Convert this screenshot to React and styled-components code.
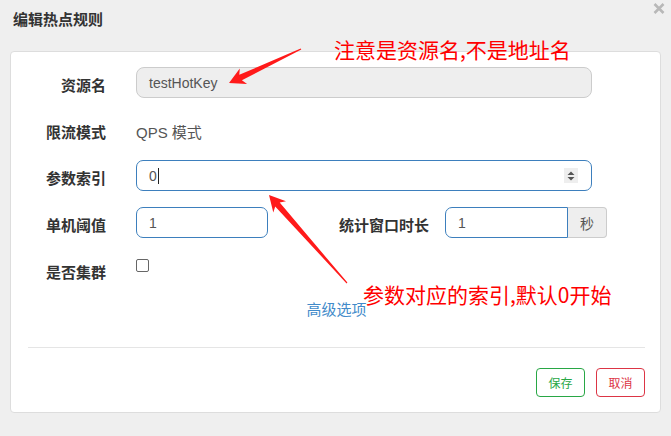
import React from "react";
import styled, { createGlobalStyle } from "styled-components";

const GlobalStyle = createGlobalStyle`
  body {
    margin: 0;
    background: #efefef;
    font-family: "Liberation Sans", "Noto Sans CJK SC", sans-serif;
  }
`;

const Frame = styled.div`
  position: relative;
  width: 671px;
  height: 436px;
  padding: 0 10px;
  box-sizing: border-box;
`;

const Header = styled.div`
  display: flex;
  justify-content: space-between;
  align-items: flex-start;
  height: 40px;
  padding-left: 3px;
  margin-right: -6px;
`;

const Title = styled.h4`
  margin: 0;
  font-size: 15px;
  line-height: 40px;
  font-weight: 700;
  color: #333;
`;

const Close = styled.svg`
  margin: 3px 2px 0 0;
`;

const Panel = styled.div`
  margin-top: 11px;
  background: #fff;
  border: 1px solid #ddd;
  border-radius: 4px;
  padding: 15px 15px 15px 0;
`;

const Row = styled.div`
  display: flex;
  align-items: flex-start;
  height: ${(p) => p.$h || 31}px;
  margin-bottom: ${(p) => p.$mb ?? 16}px;
`;

const Label = styled.label`
  flex-shrink: 0;
  box-sizing: border-box;
  width: ${(p) => p.$w || 95}px;
  margin-right: ${(p) => p.$mr || 30}px;
  padding-top: 6px;
  line-height: 25px;
  text-align: right;
  white-space: nowrap;
  font-size: 15px;
  font-weight: 700;
  color: #333;
`;

const Static = styled.div`
  padding-top: 6px;
  line-height: 25px;
  font-size: 15px;
  color: #555;
`;

const Field = styled.div`
  flex-shrink: 0;
  box-sizing: border-box;
  display: flex;
  align-items: center;
  width: ${(p) => p.$w}px;
  height: 31px;
  padding: 0 13px 0 12px;
  border: 1px solid ${(p) => (p.$disabled ? "#ccc" : "#3d7fbd")};
  border-radius: ${(p) => p.$radius || "7px"};
  background: ${(p) => (p.$disabled ? "#eee" : "#fff")};
  font-size: 14px;
  color: #555;
`;

const Value = styled.span`
  flex: 1;
  display: flex;
  align-items: center;
`;

const Caret = styled.span`
  display: inline-block;
  width: 1px;
  height: 16px;
  margin-left: 1px;
  background: #222;
`;

const Spinner = styled.svg`
  background: #eee;
`;

const Addon = styled.div`
  box-sizing: border-box;
  width: 39px;
  height: 31px;
  display: flex;
  align-items: center;
  justify-content: center;
  border: 1px solid #ccc;
  border-left: 0;
  border-radius: 0 4px 4px 0;
  background: #eee;
  font-size: 14px;
  color: #555;
`;

const Group = styled.div`
  display: flex;
`;

const Checkbox = styled.span`
  box-sizing: border-box;
  width: 13px;
  height: 13px;
  margin-top: 5px;
  border: 1px solid #666;
  border-radius: 2px;
  background: #fff;
`;

const Advanced = styled.a`
  display: block;
  padding-left: 17px;
  text-align: center;
  line-height: 20px;
  font-size: 15px;
  color: #428bca;
  text-decoration: none;
`;

const Divider = styled.div`
  height: 1px;
  margin: 27px 0 0 17px;
  background: #e5e5e5;
`;

const Footer = styled.div`
  display: flex;
  justify-content: flex-end;
  gap: 11px;
  margin-top: 20px;
`;

const Btn = styled.button`
  box-sizing: border-box;
  width: 49px;
  height: 29px;
  padding: 0;
  border: 1px solid ${(p) => p.$color};
  border-radius: 4px;
  background: #fff;
  color: ${(p) => p.$color};
  font-family: "Noto Sans CJK SC", sans-serif;
  font-size: 12px;
`;

const Overlay = styled.div`
  position: absolute;
  inset: 0;
  pointer-events: none;
`;

const Note = styled.span`
  position: absolute;
  left: ${(p) => p.$x}px;
  top: ${(p) => p.$y}px;
  font-family: "Noto Sans CJK SC", sans-serif;
  font-size: 21px;
  line-height: 21px;
  color: #ff0000;
  white-space: nowrap;
`;

// arrow polygon from tail (x1,y1) to tip (x2,y2)
function arrowPoints(x1, y1, x2, y2) {
  const headLen = 16;
  const headHalf = 8.5;
  const shaft = 3;
  const len = Math.hypot(x2 - x1, y2 - y1);
  const ux = (x2 - x1) / len;
  const uy = (y2 - y1) / len;
  const nx = -uy;
  const ny = ux;
  const bx = x2 - ux * headLen;
  const by = y2 - uy * headLen;
  const jx = x2 - ux * headLen * 0.8;
  const jy = y2 - uy * headLen * 0.8;
  const pts = [
    [x1 + nx * 0.6, y1 + ny * 0.6],
    [jx + nx * shaft, jy + ny * shaft],
    [bx + nx * headHalf, by + ny * headHalf],
    [x2, y2],
    [bx - nx * headHalf, by - ny * headHalf],
    [jx - nx * shaft, jy - ny * shaft],
    [x1 - nx * 0.6, y1 - ny * 0.6],
  ];
  return pts.map((p) => p.map((v) => v.toFixed(1)).join(",")).join(" ");
}

export default function App() {
  return (
    <Frame>
      <GlobalStyle />
      <Header>
        <Title>编辑热点规则</Title>
        <Close width="12" height="11" viewBox="0 0 12 11">
          <path d="M1.5 1 L10.5 10 M10.5 1 L1.5 10" stroke="#b8b8b8" strokeWidth="2.6" />
        </Close>
      </Header>
      <Panel>
        <Row>
          <Label>资源名</Label>
          <Field $w={456} $disabled $radius="8px">
            testHotKey
          </Field>
        </Row>
        <Row $h={30}>
          <Label>限流模式</Label>
          <Static>QPS 模式</Static>
        </Row>
        <Row>
          <Label>参数索引</Label>
          <Field $w={456}>
            <Value>
              0<Caret />
            </Value>
            <Spinner width="14" height="15" viewBox="0 0 14 15">
              <path d="M3.5 7 L7 3.5 L10.5 7 Z M3.5 9 L7 12.5 L10.5 9 Z" fill="#555" />
            </Spinner>
          </Field>
        </Row>
        <Row>
          <Label>单机阈值</Label>
          <Field $w={132}>1</Field>
          <Label $w={161} $mr={16}>
            统计窗口时长
          </Label>
          <Group>
            <Field $w={123} $radius="7px 0 0 7px">
              1
            </Field>
            <Addon>秒</Addon>
          </Group>
        </Row>
        <Row $mb={15}>
          <Label>是否集群</Label>
          <Checkbox />
        </Row>
        <Advanced href="#">高级选项</Advanced>
        <Divider />
        <Footer>
          <Btn $color="#28a745">保存</Btn>
          <Btn $color="#dc3545">取消</Btn>
        </Footer>
      </Panel>
      <Overlay>
        <svg width="671" height="436">
          <polygon points={arrowPoints(301, 49, 229, 83)} fill="#ff1a1a" />
          <polygon points={arrowPoints(347, 283, 269, 195)} fill="#ff1a1a" />
        </svg>
        <Note $x={334} $y={39}>
          注意是资源名,不是地址名
        </Note>
        <Note $x={363} $y={284}>
          参数对应的索引,默认0开始
        </Note>
      </Overlay>
    </Frame>
  );
}
